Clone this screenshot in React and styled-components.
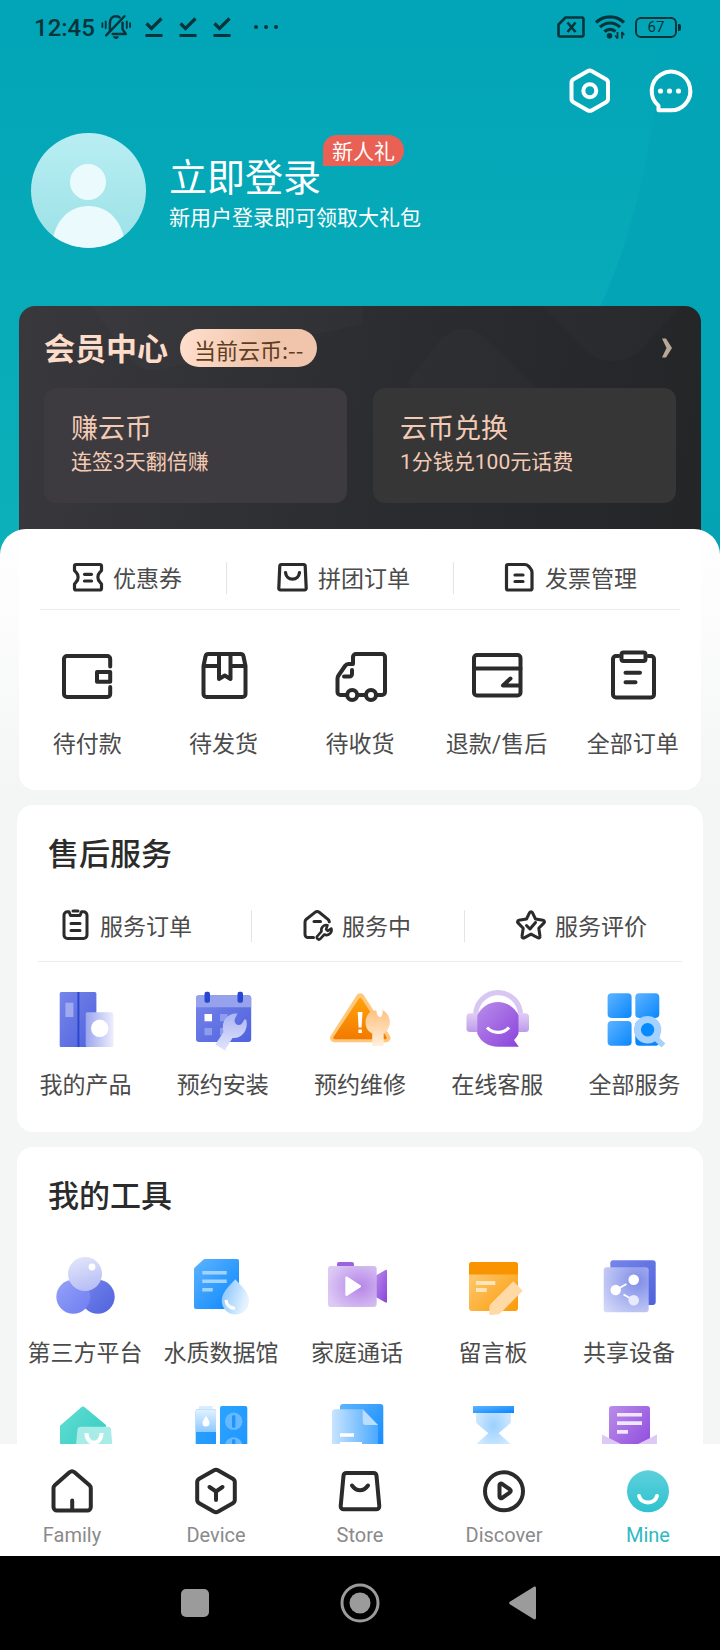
import React from "react";
import styled, { createGlobalStyle, css } from "styled-components";

const GlobalStyle = createGlobalStyle`
  * {
    box-sizing: border-box;
  }

  body {
    margin: 0;
    background: #f4f6f5;
    font-family: Roboto, "Noto Sans CJK SC", sans-serif;
  }

  button {
    border: 0;
    padding: 0;
    background: none;
    color: inherit;
    font: inherit;
    cursor: pointer;
  }

  a {
    color: inherit;
    text-decoration: none;
  }

  svg {
    display: block;
    flex: none;
    overflow: visible;
  }
`;

const Screen = styled.div`
  display: flex;
  flex-direction: column;
  height: 100vh;
`;

const Content = styled.main`
  flex: 1;
  min-height: 0;
  overflow: hidden;
`;

/* header */

const Header = styled.header`
  position: relative;
  z-index: 0;
  overflow: hidden;
  padding-bottom: 24px;
  background: linear-gradient(#02a5b7, #03a3b4);

  &::before {
    content: "";
    position: absolute;
    z-index: -1;
    top: -671px;
    left: -737px;
    width: 1396px;
    height: 1396px;
    border-radius: 50%;
    background: linear-gradient(rgba(16, 184, 190, 0) 50%, rgba(16, 184, 190, 0.7) 90%);
  }
`;

const StatusBar = styled.div`
  display: flex;
  align-items: center;
  justify-content: space-between;
  height: 54px;
  padding: 0 43px 0 34px;
  color: #06343b;
`;

const StatusGroup = styled.div`
  display: flex;
  align-items: center;
  gap: ${({ $gap }) => $gap}px;
`;

const Clock = styled.time`
  padding-top: 2px;
  font-size: 24px;
  font-weight: 500;
  line-height: 32px;
`;

const Battery = styled.span`
  position: relative;
  display: flex;
  align-items: center;
  justify-content: center;
  width: 42px;
  height: 21px;
  border: 2px solid #06343b;
  border-radius: 6px;
  font-size: 15px;
  line-height: 16px;

  &::after {
    content: "";
    position: absolute;
    right: -6px;
    top: 5px;
    width: 3px;
    height: 7px;
    border-radius: 0 2px 2px 0;
    background: #06343b;
  }
`;

const HeaderActions = styled.div`
  display: flex;
  justify-content: flex-end;
  gap: 30px;
  padding: 13px 28px 18px;
`;

const Profile = styled.section`
  display: flex;
  align-items: flex-start;
  gap: 23px;
  padding: 0 31px;
  color: #fff;
`;

const ProfileText = styled.div`
  padding-top: 2px;
`;

const NameRow = styled.div`
  display: flex;
  align-items: flex-start;
  gap: 2px;
`;

const LoginLink = styled.a`
  padding-top: 21px;
  font-size: 38px;
  line-height: 44px;
`;

const GiftBadge = styled.span`
  padding: 4px 9px 0;
  border-radius: 14px 16px 16px 0;
  background: #e96154;
  font-size: 21px;
  line-height: 27px;
`;

const ProfileHint = styled.p`
  margin: 4px 0 0;
  font-size: 21px;
  line-height: 28px;
`;

const MemberCard = styled.section`
  position: relative;
  z-index: 0;
  overflow: hidden;
  margin: 58px 19px 0;
  padding: 23px 25px 27px;
  border-radius: 16px 16px 0 0;
  background: linear-gradient(100deg, #39393d, #2c2d31 50%, #242527);
`;

const MemberPattern = styled.svg`
  position: absolute;
  z-index: -1;
  inset: 0;
`;

const MemberHead = styled.div`
  display: flex;
  align-items: center;
  gap: 12px;
`;

const MemberTitle = styled.h2`
  margin: 0;
  padding-top: 4px;
  color: #fddcc9;
  font-size: 31px;
  font-weight: 700;
  line-height: 34px;
`;

const CoinPill = styled.span`
  padding: 2px 14px 0;
  border-radius: 19px;
  background: linear-gradient(100deg, #ffdfcd, #f0c5ac 60%);
  color: #5f3d22;
  font-family: "Noto Sans CJK SC", sans-serif;
  font-size: 22px;
  line-height: 36px;
`;

const MoreButton = styled.button`
  margin-left: auto;
`;

const MemberTiles = styled.div`
  display: grid;
  grid-template-columns: 1fr 1fr;
  gap: 26px;
  margin-top: 21px;
`;

const MemberTile = styled.a`
  display: flex;
  flex-direction: column;
  gap: 3px;
  padding: 25px 27px 27px;
  border-radius: 12px;
  background: ${({ $tone }) => $tone};
  color: #f3cbb5;
`;

const TileTitle = styled.strong`
  font-size: 27px;
  font-weight: 400;
  line-height: 32px;
`;

const TileHint = styled.span`
  font-size: 21px;
  line-height: 28px;
`;

/* cards */

const Sheet = styled.div`
  position: relative;
  margin-top: -25px;
  border-radius: 26px 26px 0 0;
  background: linear-gradient(#fff, #f4f6f5 260px);
`;

const cardBase = css`
  background: #fff;
  border-radius: 16px;
`;

const OrderCard = styled.section`
  ${cardBase}
  margin: 0 19px 15px;
  padding: 33px 0 29px;
`;

const Card = styled.section`
  ${cardBase}
  margin: 0 17px 15px;
  padding: 30px 0 30px;
`;

const CardTitle = styled.h2`
  margin: 0 31px;
  color: #2b2b2b;
  font-size: 31px;
  font-weight: 500;
  line-height: 40px;
`;

const Shortcuts = styled.nav`
  display: grid;
  grid-template-columns: ${({ $columns }) => $columns};
  margin-top: ${({ $top }) => $top}px;
`;

const Shortcut = styled.a`
  display: flex;
  align-items: center;
  gap: ${({ $gap }) => $gap}px;
  height: 32px;
  padding: 0 0 2px 50px;
  color: #4b4b4b;
  font-size: 23px;
  white-space: nowrap;

  &:first-child {
    padding-left: ${({ $start }) => $start}px;
  }

  & + & {
    border-left: 1px solid #e4e4e4;
  }
`;

const Rule = styled.hr`
  height: 1px;
  margin: ${({ $top }) => $top}px 21px 0;
  border: 0;
  background: #ebebeb;
`;

const IconGrid = styled.div`
  display: grid;
  grid-template-columns: repeat(5, 1fr);
  row-gap: 32px;
  padding-top: ${({ $top }) => $top}px;
  padding-right: ${({ $end }) => $end || 0}px;
`;

const GridItem = styled.a`
  display: flex;
  flex-direction: column;
  align-items: center;
  gap: 20px;
  min-width: 0;
  color: #4b4b4b;
  font-size: 23px;
  line-height: 32px;
  white-space: nowrap;
`;

/* bottom bars */

const TabBar = styled.nav`
  display: grid;
  grid-template-columns: repeat(5, 1fr);
  padding: 23px 0 9px;
  background: #fff;
`;

const Tab = styled.a`
  display: flex;
  flex-direction: column;
  align-items: center;
  gap: 6px;
  color: ${({ $active }) => ($active ? "#2fb9c4" : "#8a8a8a")};
  font-size: 20px;
  line-height: 24px;
`;

const SystemBar = styled.div`
  display: grid;
  grid-template-columns: repeat(3, 1fr);
  align-items: center;
  justify-items: center;
  height: 94px;
  padding: 0 112px;
  background: #000;
`;

/* icons */

const Line = ({ size = 64, width = 4, color = "#2b2b2b", children }) => (
  <svg
    width={size}
    height={size}
    viewBox={`0 0 ${size} ${size}`}
    fill="none"
    stroke={color}
    strokeWidth={width}
    strokeLinecap="round"
    strokeLinejoin="round"
    aria-hidden="true"
  >
    {children}
  </svg>
);

const Art = ({ children }) => (
  <svg width="64" height="64" viewBox="0 0 64 64" aria-hidden="true">
    {children}
  </svg>
);

const Grad = ({ id, from, to, x2 = 1, y2 = 1 }) => (
  <linearGradient id={id} x1="0" y1="0" x2={x2} y2={y2}>
    <stop stopColor={from} />
    <stop offset="1" stopColor={to} />
  </linearGradient>
);

const GradientDefs = styled.svg`
  position: absolute;
`;

const SharedGradients = () => (
  <GradientDefs width="0" height="0" aria-hidden="true">
    <defs>
      <Grad id="indigo" from="#7785ea" to="#4e62dc" />
      <Grad id="indigoSoft" from="#96a2f8" to="#6d7df2" />
      <Grad id="hazeX" from="#9aa5ee" to="#eeeefc" y2={0} />
      <Grad id="hazeY" from="#e6e8fb" to="#b9c0f5" x2={0.3} />
      <Grad id="wrench" from="#aab4f2" to="#e3e5fc" x2={0} />
      <Grad id="orange" from="#ffa20a" to="#f27a00" x2={0} />
      <Grad id="orangeNote" from="#ffcf80" to="#fb9a05" />
      <Grad id="peach" from="#ffc180" to="#fff0dd" x2={0} />
      <Grad id="purple" from="#b98de9" to="#8b43dc" />
      <Grad id="lilac" from="#e0cdf5" to="#bd9bea" x2={0} />
      <Grad id="blue" from="#5db4ff" to="#0a86fd" />
      <Grad id="blueFlat" from="#2aa4ff" to="#1e94ff" />
      <Grad id="sky" from="#c8e4ff" to="#4ba9ff" y2={0} />
      <Grad id="ice" from="#e3f2ff" to="#8dc9ff" x2={0} />
      <Grad id="drop" from="#7cc0ff" to="#e6f3ff" y2={0.4} />
      <Grad id="mint" from="#62ded2" to="#2cc7c0" />
      <Grad id="mine" from="#5dd0dc" to="#2ec3cf" x2={0} />
      <Grad id="avatar" from="#b8eef3" to="#9be1e6" x2={0} />
      <radialGradient id="lilacBody" cx="0.65" cy="0.5" r="0.7">
        <stop stopColor="#b685e8" />
        <stop offset="1" stopColor="#dccaf4" />
      </radialGradient>
      <radialGradient id="shareFront" cx="0.75" cy="0.3" r="0.95">
        <stop stopColor="#7f8de8" />
        <stop offset="1" stopColor="#d3d8f8" />
      </radialGradient>
      <radialGradient id="glass" cx="0.5" cy="0.3" r="0.6">
        <stop stopColor="#9bd0ff" />
        <stop offset="1" stopColor="#d6ecff" />
      </radialGradient>
    </defs>
  </GradientDefs>
);

const MutedBellIcon = () => (
  <svg width="30" height="28" viewBox="0 0 32 28" fill="none" stroke="currentColor" strokeWidth="2.6" strokeLinecap="round" strokeLinejoin="round" aria-hidden="true">
    <path d="M9.500 17V10c0-4.500 2.500-7.500 6.500-7.500 1.500 0 2.800.4 3.800 1.200M23 9.500v7l3.500 5H12.500M5.500 23 25 2.500" />
    <path d="M5 8v7M1.500 10v4M27.500 8v7M31 10v4" strokeWidth="2" />
    <path d="M13.500 24.500h5a2.600 2.600 0 0 1-5 0z" fill="currentColor" strokeWidth="1" />
  </svg>
);

const CheckIcon = () => (
  <svg width="18" height="24" viewBox="0 0 18 24" fill="none" stroke="currentColor" strokeWidth="3.200" aria-hidden="true">
    <path d="M1.500 8.500 6.500 13.500 16.500 3.500M.5 20.500h17" />
  </svg>
);

const DotsIcon = () => (
  <svg width="34" height="24" viewBox="0 0 34 24" fill="currentColor" aria-hidden="true">
    <circle cx="11" cy="12" r="2" />
    <circle cx="21" cy="12" r="2" />
    <circle cx="31" cy="12" r="2" />
  </svg>
);

const SimIcon = () => (
  <svg width="28" height="22" viewBox="0 0 28 22" fill="none" stroke="currentColor" strokeWidth="2.600" strokeLinejoin="round" aria-hidden="true">
    <path d="M8.500 1.500H25a1.500 1.500 0 0 1 1.500 1.500v16a1.500 1.500 0 0 1-1.500 1.500H3A1.500 1.500 0 0 1 1.500 19V8.500z" />
    <path d="m10.500 6.500 8 9.500M18.500 6.500l-8 9.500" />
  </svg>
);

const WifiIcon = () => (
  <svg width="30" height="24" viewBox="0 0 30 24" fill="none" stroke="currentColor" strokeWidth="3.200" aria-hidden="true">
    <path d="M1 7.500a20 20 0 0 1 28 0M5 12.200a14 14 0 0 1 20 0M9.500 16.700a8 8 0 0 1 11-.2" />
    <circle cx="14.500" cy="20.800" r="2.800" fill="currentColor" stroke="none" />
    <path d="M22.500 17v6.500M27 17v6.500" strokeWidth="1.800" />
    <path d="m20.200 20.500 2.300 3M29.200 20 27 17" strokeWidth="1.600" />
  </svg>
);

const SettingsIcon = () => (
  <Line size={48} color="#fff">
    <path d="M21.500 4.200a4.500 4.500 0 0 1 4.500 0l14 8a4 4 0 0 1 2 3.500v16a4 4 0 0 1-2 3.500l-14 8a4.500 4.500 0 0 1-4.500 0l-14-8a4 4 0 0 1-2-3.500v-16a4 4 0 0 1 2-3.500z" />
    <circle cx="23.800" cy="23.800" r="6.500" />
  </Line>
);

const MessageIcon = () => (
  <Line size={48} color="#fff">
    <path d="M14.500 43.200V38.700A19.300 19.300 0 1 1 25 43.200z" />
    <g fill="#fff" stroke="none">
      <circle cx="16.500" cy="24" r="2.600" />
      <circle cx="25.500" cy="24" r="2.600" />
      <circle cx="34.500" cy="24" r="2.600" />
    </g>
  </Line>
);

const Avatar = () => (
  <svg width="115" height="115" viewBox="0 0 115 115" aria-hidden="true">
    <clipPath id="avatarClip">
      <circle cx="57.500" cy="57.500" r="57.500" />
    </clipPath>
    <g clipPath="url(#avatarClip)">
      <rect width="115" height="115" fill="url(#avatar)" />
      <circle cx="57" cy="49" r="18" fill="#ebfafc" />
      <path d="M21 112c2-24 17-39 36.500-39S92 88 94 112v8H21z" fill="#ebfafc" />
    </g>
  </svg>
);

const ChevronIcon = () => (
  <svg width="24" height="24" viewBox="0 0 24 24" aria-hidden="true">
    <path d="M10 2.500h4l6 9.500-6 9.500h-4l4.500-9.500z" fill="#b9a798" />
  </svg>
);

const CouponIcon = () => (
  <Line size={32} width={3.2}>
    <path d="M4 3.500h24a1.500 1.500 0 0 1 1.500 1.500v4.500l-1.500 1.700a7 7 0 0 0 0 10l1.500 1.800v4.500a1.500 1.500 0 0 1-1.500 1.500H4a1.500 1.500 0 0 1-1.500-1.500V23L4 21.200a7 7 0 0 0 0-10L2.500 9.500V5A1.500 1.500 0 0 1 4 3.500z" />
    <path d="M12.500 13.300h7M12.500 20h7" />
  </Line>
);

const BagSmallIcon = () => (
  <Line size={32} width={3.2}>
    <path d="M4.300 3.500h22.400a1.500 1.500 0 0 1 1.500 1.400l1 22.400a1.600 1.600 0 0 1-1.600 1.700H3.400a1.600 1.600 0 0 1-1.600-1.700l1-22.400a1.500 1.500 0 0 1 1.500-1.400z" />
    <path d="M8.500 11.500c.5 4 3.200 6.700 7 6.700s6.500-2.700 7-6.700" />
  </Line>
);

const InvoiceIcon = () => (
  <Line size={32} width={3.2}>
    <path d="M4 3.500h16.500c2 0 3 .5 4.200 1.800l1.800 2.200c1.200 1.300 1.500 2.300 1.500 4v16a1.500 1.500 0 0 1-1.500 1.500H4a1.500 1.500 0 0 1-1.500-1.500V5A1.500 1.500 0 0 1 4 3.500z" />
    <path d="M11 14h8M11 20.500h8" />
  </Line>
);

const ServiceListIcon = () => (
  <Line size={32} width={3}>
    <path d="M9 2.800 10.500 6.500h9.500l1.500-3.700h2A3.500 3.500 0 0 1 27 6.300V26a3.500 3.500 0 0 1-3.500 3.500h-16A3.500 3.500 0 0 1 4 26V6.300a3.500 3.500 0 0 1 3.500-3.500zM13 2h5" />
    <path d="M11 14.500h9M11 21.500h9" />
  </Line>
);

const RepairHouseIcon = () => (
  <Line size={32} width={3}>
    <path d="M11.500 28.500H6a3 3 0 0 1-3-3V13c0-1.200.4-2 1.300-2.700L13 3.300a3.400 3.400 0 0 1 4.200 0l8.800 7c.8.700 1.200 1.500 1.300 2.500" />
    <path d="M12 12.500h6.500" />
    <path d="M25.500 16.200a5 5 0 0 0-6 6.200l-4 4.600a1.900 1.900 0 0 0 2.800 2.800l4-4.300a5 5 0 0 0 7-6l-3.600 2.400-1.600-1.600z" strokeWidth="2.600" />
  </Line>
);

const StarIcon = () => (
  <Line size={32} width={3}>
    <path d="M14.700 3.400a1.500 1.500 0 0 1 2.600 0l3.200 6.600 7.700 1.300a1.500 1.500 0 0 1 .8 2.600l-5.200 5.300 1.200 8a1.500 1.500 0 0 1-2.200 1.600L16 25.200l-6.800 3.600A1.500 1.500 0 0 1 7 27.200l1.200-8L3 13.900a1.500 1.500 0 0 1 .8-2.600L11.500 10z" />
    <path d="m11.500 16.500 3.500 3.500 5.500-6.500" />
  </Line>
);

const WalletIcon = () => (
  <Line>
    <path d="M55.200 21.500V14a3 3 0 0 0-3-3H12a3 3 0 0 0-3 3v35a3 3 0 0 0 3 3h40.200a3 3 0 0 0 3-3V42" />
    <path d="M55.200 27H42v9.700h13.200z" />
  </Line>
);

const PackageIcon = () => (
  <Line>
    <path d="M11.500 21v28a3 3 0 0 0 3 3h36a3 3 0 0 0 3-3V21l-2-9.500A3 3 0 0 0 48.500 9h-32a3 3 0 0 0-3 2.500zM11.500 21H27M38.500 21h15M27 9v25l5.800-3.500L38.500 34V9" />
  </Line>
);

const TruckIcon = () => (
  <Line>
    <path d="M18.500 50H12.500a3 3 0 0 1-3-3V33.500c0-1.200.3-2 1-3L17 21c1-1.500 2-2 3.500-2H25v-7a3 3 0 0 1 3-3h26a3 3 0 0 1 3 3v35a3 3 0 0 1-3 3h-5.500M30 50h7.500" />
    <path d="M24 25v4a2.500 2.500 0 0 1-2.500 2.500H16" />
    <circle cx="24.200" cy="50" r="5" />
    <circle cx="43" cy="50" r="5" />
  </Line>
);

const RefundIcon = () => (
  <Line>
    <rect x="10" y="10" width="46.500" height="40.500" rx="3" />
    <path d="M10 23.500h46.500M46.500 33.500 39 40.500h17" />
  </Line>
);

const OrdersIcon = () => (
  <Line>
    <path d="M17.500 11H15a3 3 0 0 0-3 3v35.500a3 3 0 0 0 3 3h35a3 3 0 0 0 3-3V14a3 3 0 0 0-3-3h-2.500" />
    <rect x="20.500" y="7.500" width="24" height="8.500" rx="2" />
    <path d="M24.500 27.700h14.500M24.500 37.300h10" />
  </Line>
);

const ProductsArt = () => (
  <Art>
    <rect x="5.700" y="6" width="36.700" height="55" rx="1.500" fill="url(#indigo)" />
    <rect x="23.400" y="6" width="2" height="55" fill="#2b49cf" />
    <rect x="11.400" y="16.700" width="8" height="14.300" fill="#a0aaf0" />
    <rect x="31.700" y="26.300" width="27.700" height="34.700" rx="1.500" fill="url(#hazeX)" />
    <circle cx="45.700" cy="42.300" r="8.700" fill="#fff" />
  </Art>
);

const InstallArt = () => (
  <Art>
    <rect x="5" y="9.300" width="55.200" height="46.700" rx="3" fill="url(#indigo)" />
    <path d="M5 21.300v-9a3 3 0 0 1 3-3h49.200a3 3 0 0 1 3 3v9z" fill="#97a2ec" />
    <rect x="13.500" y="5.700" width="5.500" height="11" rx="2" fill="#2847d1" />
    <rect x="46.500" y="5.700" width="5.500" height="11" rx="2" fill="#2847d1" />
    <rect x="13.500" y="28" width="7.500" height="7.300" fill="#fff" />
    <path d="M13.500 42H21v7.300h-7.500zM29 28h7.500v7.300H29zM29 42h7.500v7.300H29z" fill="#8f9bee" />
    <path d="M46.500 27.500C36 26.500 29.500 36 32.500 46L24.300 58.500 33.800 64.500 41.500 52C50.500 53 57.800 44 55.300 34L53.800 33l-3.300 5c-3.500 2.500-8.500-.5-6.500-5.500z" fill="url(#wrench)" />
  </Art>
);

const RepairArt = () => (
  <Art>
    <path d="M28.500 9.500a4.200 4.200 0 0 1 7.500 0l26 40.500a4.200 4.200 0 0 1-3.500 6.200H6A4.200 4.200 0 0 1 2.500 50z" fill="#ffc77a" />
    <path d="M31 12.500a1.500 1.500 0 0 1 2.600 0L58.500 51a1.500 1.500 0 0 1-1.300 2.300H6.800A1.500 1.500 0 0 1 5.500 51z" fill="url(#orange)" />
    <path d="M29.700 26h4.800l-.9 15.500h-3zM30.400 43.500h3.500v3.500h-3.500z" fill="#fff" />
    <path d="M44.200 60V47.500C36.500 44 35.800 34 40.500 27.500c2-2.300 4.700-3.300 8-3 0 3.500 1.500 6.500 3.500 6.500s3-3.500 2.500-7C63.500 28.500 64.500 42 55.700 47.500V60z" fill="url(#peach)" />
  </Art>
);

const SupportArt = () => (
  <Art>
    <path d="M10.700 31v-2a22.400 22.400 0 0 1 44.800 0v2" fill="none" stroke="#d8c7f2" strokeWidth="5.200" />
    <rect x="1.500" y="27.300" width="14" height="18.700" rx="3.500" fill="url(#lilac)" />
    <rect x="50" y="27.300" width="14" height="18.700" rx="3.500" fill="url(#lilac)" />
    <path d="M12.300 29.500a22.500 22.500 0 0 1 41.200 0v18c-1 2.500-2.500 4.500-4.500 6.500l4.800 6.700H33c-9.500 0-17.200-5-20.700-13z" fill="url(#purple)" />
    <path d="M22 41.500c6 6.500 16 6.500 22 0" fill="none" stroke="#fff" strokeWidth="3.200" />
  </Art>
);

const AllServicesArt = () => (
  <Art>
    <rect x="5.600" y="7.300" width="24" height="24.700" rx="4" fill="url(#blue)" />
    <rect x="33.300" y="7.300" width="24" height="24.700" rx="4" fill="url(#blue)" />
    <rect x="5.600" y="35" width="24" height="24.700" rx="4" fill="url(#blue)" />
    <rect x="33.300" y="35" width="24" height="24.700" rx="4" fill="#0a86fd" />
    <circle cx="45.600" cy="43.700" r="10.200" fill="#068bff" stroke="#a5d1fe" strokeWidth="7" />
    <path d="m54 52.500 7.500 7" stroke="#a5d1fe" strokeWidth="5.500" />
  </Art>
);

const PlatformArt = () => (
  <Art>
    <circle cx="44.700" cy="42.700" r="17" fill="url(#indigo)" />
    <circle cx="20.300" cy="42.700" r="17" fill="url(#indigoSoft)" />
    <circle cx="32" cy="20" r="17" fill="url(#hazeY)" />
    <circle cx="39" cy="13" r="3.400" fill="#fff" />
  </Art>
);

const WaterArt = () => (
  <Art>
    <path d="M16 5h32a2 2 0 0 1 2 2v46a2 2 0 0 1-2 2H7a2 2 0 0 1-2-2V15.500c0-1 .3-1.700 1-2.300L14 6c.6-.6 1.200-1 2-1z" fill="url(#blue)" />
    <path d="M13.300 17h24.400v3.400H13.300zM13.300 25.500h24.400v3.400H13.300zM13.300 34h10.400v3.600H13.300z" fill="#a3d4ff" />
    <path d="M46.300 25.300c7 7.500 13.700 13.500 13.700 21.500a13.600 13.600 0 0 1-27.200 0c0-8 6.500-14 13.500-21.500z" fill="url(#drop)" />
    <path d="M37 46c.5 5 4 8 9 8.500" fill="none" stroke="#fff" strokeWidth="3.200" />
  </Art>
);

const VideoArt = () => (
  <Art>
    <path d="M12 13V10a2 2 0 0 1 2-2h13a2 2 0 0 1 2 2v3z" fill="#9d62df" />
    <path d="m50 22 10.500-6c.8-.4 1.500 0 1.500.8v31c0 .8-.7 1.200-1.500.8L50 42.500z" fill="url(#purple)" />
    <rect x="3" y="12" width="48.700" height="41" rx="3" fill="url(#lilacBody)" />
    <path d="M20.300 24c0-1.200 1-1.700 2-1.200l13.200 8.500c.8.600.8 1.300 0 1.900l-13.200 8.500c-1 .5-2 0-2-1.200z" fill="#fff" />
  </Art>
);

const NoteArt = () => (
  <Art>
    <rect x="8" y="8" width="49" height="49" rx="3" fill="url(#orangeNote)" />
    <path d="M8 20.500V11a3 3 0 0 1 3-3h43a3 3 0 0 1 3 3v9.500z" fill="#f99400" />
    <path d="M15 27h19.300v4H15zM15 34h10.700v4H15z" fill="#ffe4b8" />
    <path d="m52.300 27.300 9.500 9.500-22 22c-1.300 1.300-2.500 1.700-4 1.800l-6.500.4c-.8 0-1-.4-1-1v-6.500c0-1.500.5-2.700 1.500-3.700z" fill="#ffd9a6" />
  </Art>
);

const ShareArt = () => (
  <Art>
    <rect x="13.300" y="6.300" width="45.400" height="44.700" rx="3" fill="url(#indigo)" />
    <rect x="6.700" y="13.300" width="45" height="45" rx="3" fill="url(#shareFront)" />
    <path d="m19 36 10.500-6M26.500 40.500l9 5" stroke="#fff" strokeWidth="1.800" />
    <circle cx="18.700" cy="36" r="5.200" fill="#fff" />
    <circle cx="36.700" cy="25.700" r="5.300" fill="#fff" />
    <circle cx="36.700" cy="46.300" r="5.300" fill="#e7eafd" />
  </Art>
);

const HomeShopArt = () => (
  <Art>
    <path d="M28 5.500a3 3 0 0 1 4 0l21 17.500V62H7V23.700z" fill="url(#mint)" />
    <path d="M27.500 24.700h27.500a3 3 0 0 1 3 2.700L61 62H21l3.500-34.600a3 3 0 0 1 3-2.700z" fill="#a8ece8" />
    <path d="M33.500 31c0 13 15 13 15 0" fill="none" stroke="#fff" strokeWidth="4" />
  </Art>
);

const SwitchArt = () => (
  <Art>
    <rect x="10" y="4" width="13.700" height="5" rx="1" fill="#d9edff" />
    <rect x="6.700" y="7.300" width="20.300" height="54" rx="2" fill="url(#blueFlat)" />
    <path d="M6.700 30V9.300a2 2 0 0 1 2-2H25a2 2 0 0 1 2 2V30z" fill="url(#ice)" />
    <path d="M17 14c2 3 3.500 5 3.500 7a3.500 3.500 0 0 1-7 0c0-2 1.500-4 3.500-7z" fill="#fff" />
    <rect x="31" y="4" width="27.300" height="57" rx="2" fill="url(#blueFlat)" />
    <circle cx="44.700" cy="19.300" r="8.700" fill="#66b9ff" />
    <circle cx="44.700" cy="44" r="8.700" fill="#66b9ff" />
    <rect x="43" y="13" width="3.400" height="13" rx="1.700" fill="#1e94ff" />
    <rect x="43" y="37" width="3.400" height="13" rx="1.700" fill="#1e94ff" />
  </Art>
);

const DocumentArt = () => (
  <Art>
    <rect x="15" y="2" width="43.300" height="58" rx="3" fill="url(#blue)" />
    <path d="M10 7.300h28L53 23v39H7V10.300a3 3 0 0 1 3-3z" fill="url(#sky)" />
    <path d="M37.700 7.300 53 23H41a3.300 3.300 0 0 1-3.300-3.300z" fill="#b9defe" />
    <path d="M15 31.300h14v3.400H15zM15 40h22v3.400H15z" fill="#fff" />
  </Art>
);

const HourglassArt = () => (
  <Art>
    <path d="M15 10h35v9c0 1.500-.6 2.400-1.700 3.200L37.700 31.300 48.500 41c1 .8 1.500 1.800 1.500 3v12H15V44c0-1.200.5-2.200 1.500-3l10.800-9.700-10.600-9.100C15.600 21.400 15 20.500 15 19z" fill="url(#glass)" />
    <rect x="12" y="4" width="41" height="7" fill="url(#blue)" />
  </Art>
);

const MailArt = () => (
  <Art>
    <rect x="12" y="4" width="41" height="54" rx="3" fill="url(#purple)" />
    <path d="M20 11h25v3.400H20zM20 19.300h25v3.600H20zM20 28h11v3.700H20z" fill="#f1e6fc" />
    <path d="M5 32.500 28 44a10 10 0 0 0 9 0l23-11.500V60H5z" fill="#dcc9f5" />
  </Art>
);

const FamilyIcon = () => (
  <Line size={50}>
    <path d="M22.500 5.300a4 4 0 0 1 5 0l15 13a4 4 0 0 1 1.300 3V40a3.500 3.500 0 0 1-3.500 3.500H10A3.500 3.500 0 0 1 6.500 40V21.300a4 4 0 0 1 1.300-3zM25.200 43v-9.500" />
  </Line>
);

const DeviceIcon = () => (
  <Line size={50}>
    <path d="M22.700 3.500a4.500 4.500 0 0 1 4.600 0l14.500 8.300a4 4 0 0 1 2 3.500v17.400a4 4 0 0 1-2 3.500L27.300 44.500a4.500 4.500 0 0 1-4.600 0L8.200 36.200a4 4 0 0 1-2-3.500V15.300a4 4 0 0 1 2-3.500z" />
    <path d="m18.500 20 6.500 4.500 6.500-4.500M25 24.500v8.500" />
  </Line>
);

const StoreIcon = () => (
  <Line size={50}>
    <path d="M11.500 6h27a3 3 0 0 1 3 2.700L44.300 39a3 3 0 0 1-3 3.300H8.700a3 3 0 0 1-3-3.300L8.500 8.700a3 3 0 0 1 3-2.700zM17 18.500c4.500 6.300 11.500 6.300 16 0" />
  </Line>
);

const DiscoverIcon = () => (
  <Line size={50}>
    <circle cx="25" cy="24.300" r="19" />
    <path d="M20.500 18.300c0-1.500 1.300-2.200 2.500-1.500l8 5.700c1 .8 1 2 0 2.800l-8 5.700c-1.200.7-2.500 0-2.500-1.500z" />
  </Line>
);

const MineIcon = () => (
  <Line size={50} color="#fff">
    <circle cx="25" cy="24.300" r="21" fill="url(#mine)" stroke="none" />
    <path d="M16 29c2.500 8.500 15.500 8.500 18 0" />
  </Line>
);

const orderLinks = [
  { label: "优惠券", Icon: CouponIcon },
  { label: "拼团订单", Icon: BagSmallIcon },
  { label: "发票管理", Icon: InvoiceIcon },
];

const orders = [
  { label: "待付款", Icon: WalletIcon },
  { label: "待发货", Icon: PackageIcon },
  { label: "待收货", Icon: TruckIcon },
  { label: "退款/售后", Icon: RefundIcon },
  { label: "全部订单", Icon: OrdersIcon },
];

const serviceLinks = [
  { label: "服务订单", Icon: ServiceListIcon },
  { label: "服务中", Icon: RepairHouseIcon },
  { label: "服务评价", Icon: StarIcon },
];

const services = [
  { label: "我的产品", Icon: ProductsArt },
  { label: "预约安装", Icon: InstallArt },
  { label: "预约维修", Icon: RepairArt },
  { label: "在线客服", Icon: SupportArt },
  { label: "全部服务", Icon: AllServicesArt },
];

const tools = [
  { label: "第三方平台", Icon: PlatformArt },
  { label: "水质数据馆", Icon: WaterArt },
  { label: "家庭通话", Icon: VideoArt },
  { label: "留言板", Icon: NoteArt },
  { label: "共享设备", Icon: ShareArt },
  { Icon: HomeShopArt },
  { Icon: SwitchArt },
  { Icon: DocumentArt },
  { Icon: HourglassArt },
  { Icon: MailArt },
];

const tabs = [
  { label: "Family", Icon: FamilyIcon },
  { label: "Device", Icon: DeviceIcon },
  { label: "Store", Icon: StoreIcon },
  { label: "Discover", Icon: DiscoverIcon },
  { label: "Mine", Icon: MineIcon, active: true },
];

const ShortcutList = ({ items, columns, top, start, gap }) => (
  <Shortcuts $columns={columns} $top={top}>
    {items.map(({ label, Icon }) => (
      <Shortcut href="#" key={label} $start={start} $gap={gap}>
        <Icon />
        {label}
      </Shortcut>
    ))}
  </Shortcuts>
);

const IconList = ({ items, top, end }) => (
  <IconGrid $top={top} $end={end}>
    {items.map(({ label, Icon }, i) => (
      <GridItem href="#" key={i}>
        <Icon />
        {label && <span>{label}</span>}
      </GridItem>
    ))}
  </IconGrid>
);

export default function App() {
  return (
    <Screen>
      <GlobalStyle />
      <SharedGradients />
      <Content>
        <Header>
          <StatusBar>
            <StatusGroup $gap={14}>
              <StatusGroup $gap={6}>
                <Clock>12:45</Clock>
                <MutedBellIcon />
              </StatusGroup>
              <StatusGroup $gap={16}>
                <CheckIcon />
                <CheckIcon />
                <CheckIcon />
              </StatusGroup>
              <DotsIcon />
            </StatusGroup>
            <StatusGroup $gap={10}>
              <SimIcon />
              <WifiIcon />
              <Battery>67</Battery>
            </StatusGroup>
          </StatusBar>

          <HeaderActions>
            <button type="button" aria-label="设置">
              <SettingsIcon />
            </button>
            <button type="button" aria-label="消息">
              <MessageIcon />
            </button>
          </HeaderActions>

          <Profile>
            <Avatar />
            <ProfileText>
              <NameRow>
                <LoginLink href="#">立即登录</LoginLink>
                <GiftBadge>新人礼</GiftBadge>
              </NameRow>
              <ProfileHint>新用户登录即可领取大礼包</ProfileHint>
            </ProfileText>
          </Profile>

          <MemberCard>
            <MemberPattern width="682" height="224" viewBox="0 0 682 224" aria-hidden="true">
              <g fill="#fff" fillOpacity="0.015">
                <path d="M72 0h272v18L140 64c-12 2-22-3-30-12z" />
                <path d="M390 74 420 36c14-18 36-18 50 0l48 46H394c-4-2-5-5-4-8z" />
                <path d="M524 0h138l-40 44c-18 16-44 14-58-2z" />
              </g>
            </MemberPattern>
            <MemberHead>
              <MemberTitle>会员中心</MemberTitle>
              <CoinPill>当前云币:--</CoinPill>
              <MoreButton type="button" aria-label="更多">
                <ChevronIcon />
              </MoreButton>
            </MemberHead>
            <MemberTiles>
              <MemberTile href="#" $tone="#3d3b40">
                <TileTitle>赚云币</TileTitle>
                <TileHint>连签3天翻倍赚</TileHint>
              </MemberTile>
              <MemberTile href="#" $tone="#363637">
                <TileTitle>云币兑换</TileTitle>
                <TileHint>1分钱兑100元话费</TileHint>
              </MemberTile>
            </MemberTiles>
          </MemberCard>
        </Header>

        <Sheet>
          <OrderCard>
            <ShortcutList items={orderLinks} columns="207fr 227fr 248fr" top={0} start={53} gap={9} />
            <Rule $top={15} />
            <IconList items={orders} top={35} />
          </OrderCard>

          <Card>
            <CardTitle>售后服务</CardTitle>
            <ShortcutList items={serviceLinks} columns="234fr 213fr 239fr" top={35} start={43} gap={8} />
            <Rule $top={19} />
            <IconList items={services} top={24} />
          </Card>

          <Card>
            <CardTitle>我的工具</CardTitle>
            <IconList items={tools} top={37} end={6} />
          </Card>
        </Sheet>
      </Content>

      <TabBar>
        {tabs.map(({ label, Icon, active }) => (
          <Tab href="#" key={label} $active={active}>
            <Icon />
            {label}
          </Tab>
        ))}
      </TabBar>

      <SystemBar>
        <svg width="28" height="28" viewBox="0 0 28 28" aria-hidden="true">
          <rect width="28" height="28" rx="5" fill="#9b9b9b" />
        </svg>
        <svg width="40" height="40" viewBox="0 0 40 40" aria-hidden="true">
          <circle cx="20" cy="20" r="18" fill="none" stroke="#9b9b9b" strokeWidth="3" />
          <circle cx="20" cy="20" r="10.500" fill="#9b9b9b" />
        </svg>
        <svg width="32" height="34" viewBox="0 0 32 34" aria-hidden="true">
          <path d="M24.500 1c1.200-.9 2.500-.4 2.500 1v30c0 1.400-1.300 1.900-2.500 1L.8 18.200a1.500 1.500 0 0 1 0-2.400z" fill="#9b9b9b" />
        </svg>
      </SystemBar>
    </Screen>
  );
}
